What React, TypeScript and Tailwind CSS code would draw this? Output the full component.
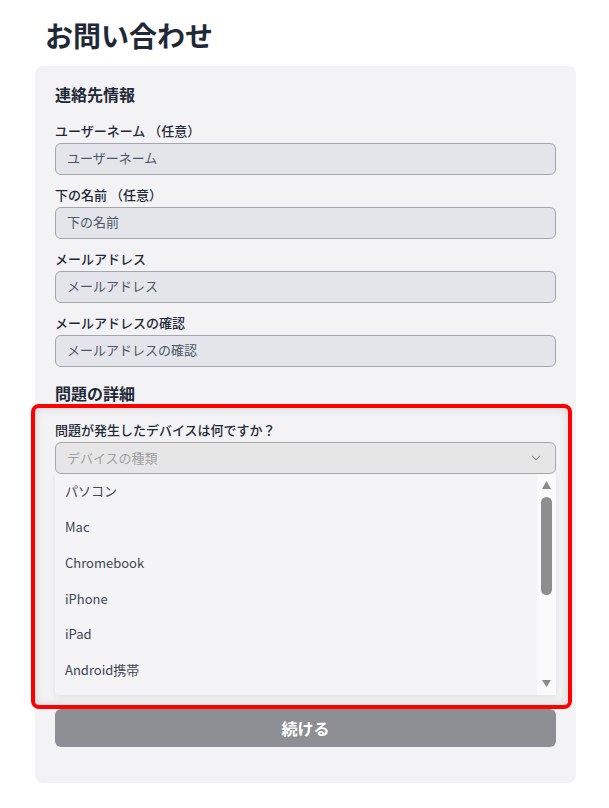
import React from "react";

const contactFields = [
  { label: "ユーザーネーム （任意）", placeholder: "ユーザーネーム" },
  { label: "下の名前 （任意）", placeholder: "下の名前" },
  { label: "メールアドレス", placeholder: "メールアドレス" },
  { label: "メールアドレスの確認", placeholder: "メールアドレスの確認" },
];

const devices = ["パソコン", "Mac", "Chromebook", "iPhone", "iPad", "Android携帯"];

const Field = ({ label, placeholder }: { label: string; placeholder: string }) => (
  <div className="flex flex-col gap-[2px]">
    <label className="text-[13px] leading-5 font-medium text-[#1f2937]">{label}</label>
    <input
      placeholder={placeholder}
      className="h-8 w-full rounded-md border border-[#a3a6ad] bg-[#e4e5ea] px-[11px] pb-[3px] text-[13px] text-[#374151] placeholder:text-[#4b5563] outline-none"
    />
  </div>
);

const FakeScrollbar = () => (
  <div className="w-[19px] bg-[#fafafa] flex flex-col items-center pt-[7px] pb-[8px]">
    <svg width="9" height="8" viewBox="0 0 9 8">
      <path d="M4.5 0L9 8H0z" fill="#8a8a8a" />
    </svg>
    <div className="mt-[8px] w-[11px] h-[98px] rounded-full bg-[#8e8e8e]" />
    <div className="flex-1" />
    <svg width="9" height="7" viewBox="0 0 9 7">
      <path d="M0 0h9L4.5 7z" fill="#8a8a8a" />
    </svg>
  </div>
);

const App = () => {
  return (
    <div className="min-h-screen bg-white font-['Noto_Sans_CJK_JP',sans-serif]">
      <div className="w-[541px] ml-[35px] pt-[13px] pb-[25px]">
        <h1 className="px-[10px] text-[28px] leading-[44px] font-bold text-[#1f2937] mb-[9px]">
          お問い合わせ
        </h1>

        <div className="rounded-lg bg-[#f3f3f5] px-5 pt-[16px] pb-[36px]">
          <h2 className="text-base leading-6 font-bold text-[#1f2937]">連絡先情報</h2>

          <div className="mt-[15px] flex flex-col gap-[10px]">
            {contactFields.map((f) => (
              <Field key={f.label} label={f.label} placeholder={f.placeholder} />
            ))}
          </div>

          <h2 className="mt-[14px] text-base leading-6 font-bold text-[#1f2937]">問題の詳細</h2>

          <div className="relative mt-[15px]">
            <div className="flex flex-col gap-[2px]">
              <label className="text-[13px] leading-5 font-medium text-[#1f2937]">
                問題が発生したデバイスは何ですか？
              </label>
              <div className="h-8 flex items-center justify-between rounded-md border border-[#a8a8a8] bg-[#e6e6e7] pl-[11px] pr-[14px] pb-px">
                <span className="text-[13px] text-[#a0a0a4]">デバイスの種類</span>
                <svg width="10" height="6" viewBox="0 0 10 6" fill="none">
                  <path d="M1 0.8l4 4 4-4" stroke="#8c8c8c" strokeWidth="1.1" />
                </svg>
              </div>
            </div>

            <div className="flex h-[221px] bg-[#f4f4f6] rounded-b-sm shadow-[0_2px_6px_rgba(0,0,0,0.08)]">
              <ul className="flex-1 flex flex-col -mt-px">
                {devices.map((d) => (
                  <li key={d} className="h-[35.8px] flex items-center pl-[10px] text-[13px] text-[#3f4654]">
                    {d}
                  </li>
                ))}
              </ul>
              <FakeScrollbar />
            </div>

            <div className="pointer-events-none absolute -left-[24px] -right-[16px] -top-[16px] -bottom-[14px] rounded-lg border-[4.5px] border-[#ff0000] shadow-[inset_0_0_10px_rgba(0,0,0,0.12)]" />
          </div>

          <button className="mt-[14px] w-full h-[38px] rounded-md bg-[#8e8f94] text-white text-base font-bold pb-px">
            続ける
          </button>
        </div>
      </div>
    </div>
  );
};

export default App;
